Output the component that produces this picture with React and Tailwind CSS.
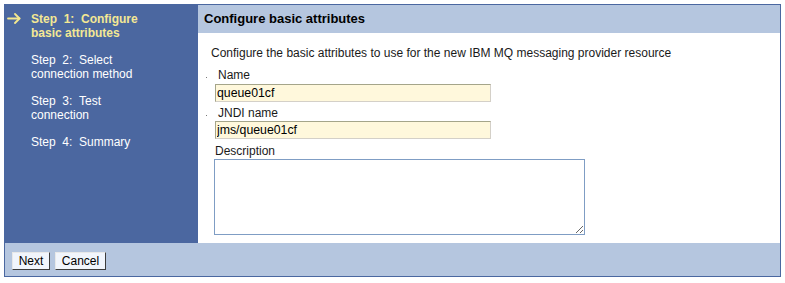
import { useState } from 'react';

const steps = [
    ["Step\u00a0\u00a01:\u00a0\u00a0Configure", "basic attributes"],
    ["Step\u00a0\u00a02:\u00a0\u00a0Select", "connection method"],
    ["Step\u00a0\u00a03:\u00a0\u00a0Test", "connection"],
    ["Step\u00a0\u00a04:\u00a0\u00a0Summary"],
];

export default function App() {
    const [name, setName] = useState("queue01cf");
    const [jndi, setJndi] = useState("jms/queue01cf");

    const inputCls = "w-[276px] h-[18px] bg-[#fff8dc] border border-t-[#a5a58a] border-l-[#a5a58a] border-r-[#d4d0c8] border-b-[#d4d0c8] pl-[1px] text-[12.3px] leading-[16px] text-black outline-none";

    return (
        <div className="w-[785px] h-[283px] bg-white pt-[4px] pl-[4px] text-[12px] text-[#1a1a1a]" style={{ fontFamily: '"Liberation Sans", Arial, sans-serif' }}>
            <div className="w-[777px] border border-[#4a67a0] flex flex-col">
                {/* main area */}
                <div className="flex h-[238px]">
                    {/* wizard steps */}
                    <div className="w-[193px] bg-[#4b67a0] pt-[7px] flex flex-col gap-[13px]">
                        {steps.map((s, i) => (
                            <div key={i} className="flex leading-[14px]">
                                <div className="w-[26px] pl-[2px] pt-[1px]">
                                    {i === 0 && (
                                        <svg width="14" height="11" viewBox="0 0 14 11" fill="none" stroke="#f4e88e" strokeWidth="1.8" strokeLinecap="round" strokeLinejoin="round">
                                            <path d="M1 5.5 H12.5" />
                                            <path d="M8 1 L12.5 5.5 L8 10" />
                                        </svg>
                                    )}
                                </div>
                                <div className={i === 0 ? "font-bold text-[#f4e894]" : "text-white"}>
                                    {s.map((line, j) => (
                                        <div key={j}>{line}</div>
                                    ))}
                                </div>
                            </div>
                        ))}
                    </div>

                    {/* content */}
                    <div className="flex-1 flex flex-col bg-white">
                        <div className="h-[28px] bg-[#b5c6df] pl-[6px] flex items-center font-bold text-[13px] text-black">
                            Configure basic attributes
                        </div>
                        <div className="pt-[13px] pl-[13px]">
                            <p className="leading-[15px]">
                                Configure the basic attributes to use for the new IBM MQ messaging provider resource
                            </p>
                            <div className="mt-[6px] pl-[4px] flex flex-col">
                                <div className="flex items-center h-[16px]">
                                    <span className="w-[1px] h-[1px] bg-[#777] mt-[4px] mr-[11px] ml-[-9px]"></span>
                                    <span>Name</span>
                                </div>
                                <input className={`mt-[1px] ${inputCls}`} value={name} onChange={e => setName(e.target.value)} />
                                <div className="flex items-center h-[16px] mt-[3px]">
                                    <span className="w-[1px] h-[1px] bg-[#777] mt-[4px] mr-[11px] ml-[-9px]"></span>
                                    <span>JNDI name</span>
                                </div>
                                <input className={inputCls} value={jndi} onChange={e => setJndi(e.target.value)} />
                                <div className="h-[15px] leading-[15px] mt-[5px]">Description</div>
                                <textarea className="ml-[-1px] w-[371px] h-[76px] border border-[#7f9dc4] bg-white outline-none"></textarea>
                            </div>
                        </div>
                    </div>
                </div>

                {/* footer buttons */}
                <div className="h-[33px] bg-[#b5c6df] pt-[9px] pl-[7px] flex items-start gap-[5px]">
                    <button className="h-[18px] w-[38px] bg-[#f1f5fc] border border-t-[#e8e8e8] border-l-[#e8e8e8] border-r-[#3c3c3c] border-b-[#3c3c3c] text-[12px] leading-[14px] text-black">
                        Next
                    </button>
                    <button className="h-[18px] w-[51px] bg-[#f1f5fc] border border-t-[#e8e8e8] border-l-[#e8e8e8] border-r-[#3c3c3c] border-b-[#3c3c3c] text-[12px] leading-[14px] text-black">
                        Cancel
                    </button>
                </div>
            </div>
        </div>
    );
}
